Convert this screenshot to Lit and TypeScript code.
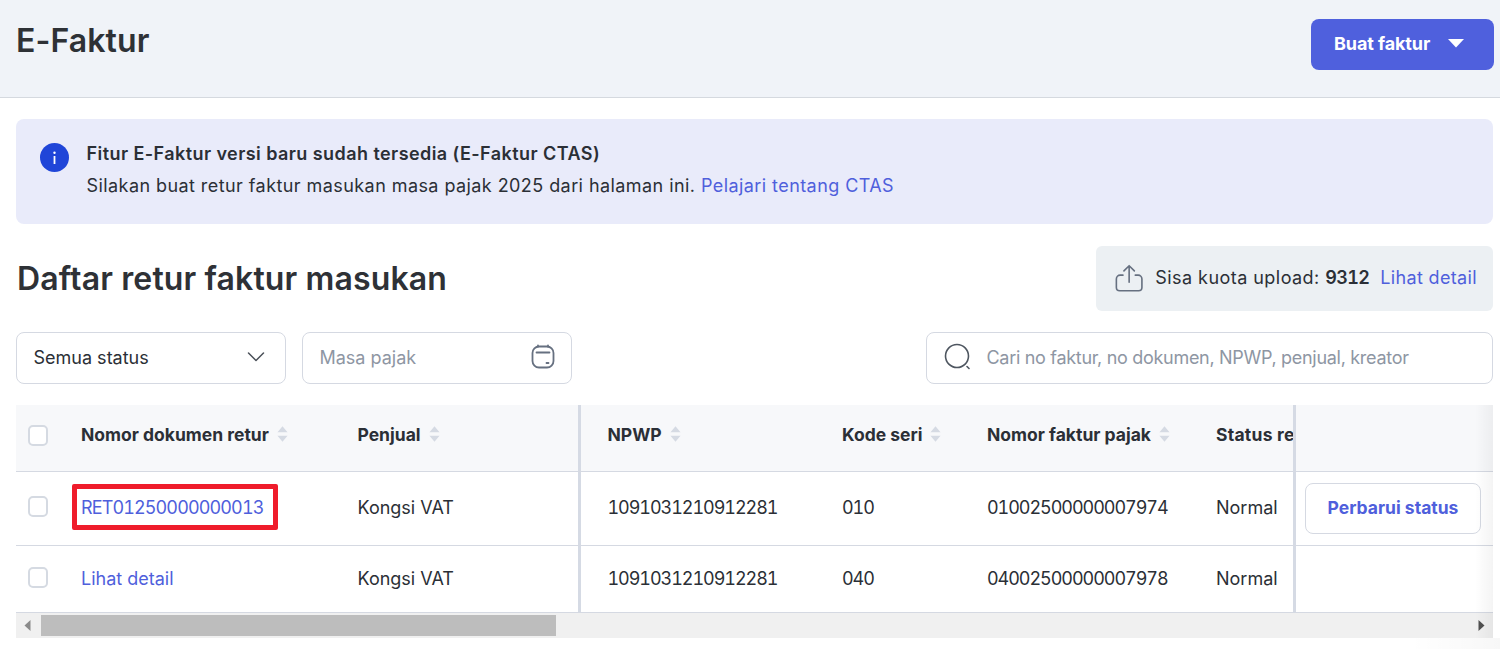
import { LitElement, html, css } from "lit";
import { customElement } from "lit/decorators.js";

const sort = html`<svg class="sort" width="11" height="18" viewBox="0 0 12 18"><path d="M6 0.5 11.5 7H0.5Z M0.5 11H11.5L6 17.5Z" fill="#d5dae3"/></svg>`;

@customElement("app-root")
export class AppRoot extends LitElement {
  static styles = css`
    :host { display: block; width: 1500px; height: 649px; overflow: hidden; background: #fff; font-family: Inter, "Liberation Sans", sans-serif; color: #2b2f36; font-size: 18px; position: relative; }
    * { box-sizing: border-box; }
    a { color: #4f5fdc; text-decoration: none; }
    .num { font-variant-numeric: tabular-nums; letter-spacing: -1.05px; }
    .head { height: 98px; background: #f0f3f8; border-bottom: 1px solid #d5d9df; display: flex; justify-content: space-between; padding: 20px 6px 0 16px; }
    h1 { margin: 0; font-size: 32px; line-height: 42px; font-weight: 600; color: #2e3136; letter-spacing: 0.1px; }
    .cta { width: 183px; height: 51px; margin-top: -1px; background: #4f60dd; color: #fff; border-radius: 8px; display: flex; align-items: center; padding-left: 23px; gap: 18px; font-weight: 650; font-size: 18px; letter-spacing: -0.1px; padding-bottom: 2px; }
    .banner { margin: 21px 7px 0 16px; height: 105px; background: #e9ebfa; border-radius: 8px; display: flex; gap: 17.5px; padding: 19px 24px; line-height: 32px; letter-spacing: 0.43px; }
    .banner svg { margin-top: 5px; flex: none; }
    .banner b { font-weight: 600; display: block; }
    .sec { margin: 22px 7px 0 17px; display: flex; justify-content: space-between; height: 65px; align-items: center; }
    h2 { margin: 0; font-size: 32px; font-weight: 600; color: #2e3136; letter-spacing: 0.13px; }
    .quota { width: 397px; height: 65px; background: #ecf0f3; border-radius: 6px; display: flex; align-items: center; padding: 0 16px 2px 18px; gap: 11px; white-space: nowrap; letter-spacing: 0.35px; }
    .quota span { letter-spacing: 0.45px; }
    .quota b { font-weight: 600; font-variant-numeric: tabular-nums; letter-spacing: -0.65px; }
    .quota a { margin-left: auto; }
    .filters { margin: 21px 7px 0 16px; display: flex; gap: 16px; }
    .f { width: 270px; height: 52px; border: 1px solid #d5d9e2; border-radius: 8px; display: flex; align-items: center; justify-content: space-between; padding: 0 16px 2px 16.5px; }
    .f.sel { padding-right: 20px; }
    .ph { color: #8e96a3; }
    .search { margin-left: auto; width: 567px; justify-content: flex-start; gap: 15px; letter-spacing: -0.3px; }
    .table { margin: 21px 7px 0 16px; height: 233px; position: relative; overflow: hidden; background: #f0f0f0; }
    .row { display: grid; grid-template-columns: 49px 276px 240px 261px 145px 229px 77px 200px; background: #fff; border-bottom: 1px solid #d5d9e2; height: 74px; align-items: stretch; }
    .row.h { height: 67px; background: #f7f8fa; font-weight: 650; font-size: 17.5px; }
    .row.l { height: 67px; }
    .c { display: flex; align-items: center; padding: 0 0 3px 16px; white-space: nowrap; overflow: hidden; gap: 8px; }
    .row.h .c { padding-bottom: 8px; }
    .row.l .c { padding-bottom: 1px; }
    .c.sel { padding-left: 11.5px; padding-bottom: 4px; overflow: visible; }
    .row.h .c.sel { padding-bottom: 6px; }
    .row.l .c.sel { padding-bottom: 3px; }
    .c.mk { overflow: visible; }
    .c.left { border-right: 3px solid #d5dae4; padding-left: 16.5px; }
    .c.np { padding-left: 26.500px; }
    .c.st { padding-left: 0; }
    .row.h .c.tail { letter-spacing: 0.25px; }
    .c.right { border-left: 3px solid #d5dae4; padding-left: 9px; padding-bottom: 0; }
    .cb { width: 20px; height: 21px; border: 2px solid #d5dae2; border-radius: 5px; background: #fff; }
    .mark { position: relative; font-variant-numeric: tabular-nums; letter-spacing: -0.88px; }
    .mark::after { content: ""; box-sizing: border-box; position: absolute; left: -9px; top: -13px; width: 206px; height: 46px; border: 5px solid #ef1c2b; border-radius: 2px; }
    .btn { width: 176px; height: 51px; border: 1px solid #d5d9e2; border-radius: 8px; display: flex; align-items: center; justify-content: center; color: #4f5fdc; font-weight: 650; background: #fff; font-size: 17.5px; padding-bottom: 2px; }
    .bar { height: 25px; background: #f0f0f0; display: flex; align-items: center; position: relative; }
    .thumb { position: absolute; left: 25px; top: 2px; width: 515px; height: 21px; background: #bdbdbd; }
    .ar { position: absolute; top: 7px; }
    .fade { position: absolute; right: 0; top: 0; bottom: 0; width: 18px; background: linear-gradient(to right, rgba(0,0,0,0), rgba(0,0,0,0.045)); pointer-events: none; }
    .glow { position: absolute; right: 0; bottom: 0; width: 90px; height: 11px; background: linear-gradient(to right, rgba(0,0,0,0), rgba(0,0,0,0.03)); pointer-events: none; }
  `;

  private row(cls: string, cells: unknown[]) {
    return html`<div class="row ${cls}">
      <div class="c sel"><span class="cb"></span></div>
      <div class="c mk">${cells[0]}</div>
      <div class="c left">${cells[1]}</div>
      <div class="c np">${cells[2]}</div>
      <div class="c st">${cells[3]}</div>
      <div class="c st">${cells[4]}</div>
      <div class="c st tail">${cells[5]}</div>
      <div class="c right">${cells[6]}</div>
    </div>`;
  }

  render() {
    const th = (t: string) => html`<span>${t}</span>${sort}`;
    const num = (t: string) => html`<span class="num">${t}</span>`;
    return html`
      <div class="head">
        <h1>E-Faktur</h1>
        <div class="cta">Buat faktur
          <svg width="16" height="9" viewBox="0 0 16 9"><path d="M0 0H16L8 8.5Z" fill="#fff"/></svg>
        </div>
      </div>
      <div class="banner">
        <svg width="29" height="29" viewBox="0 0 29 29"><circle cx="14.5" cy="14.5" r="14.5" fill="#1f45d8"/><rect x="13.6" y="13" width="1.8" height="8" fill="#fff"/><circle cx="14.5" cy="9.8" r="1.2" fill="#fff"/></svg>
        <div><b>Fitur E-Faktur versi baru sudah tersedia (E-Faktur CTAS)</b>Silakan buat retur faktur masukan masa pajak 2025 dari halaman ini. <a>Pelajari tentang CTAS</a></div>
      </div>
      <div class="sec">
        <h2>Daftar retur faktur masukan</h2>
        <div class="quota">
          <svg width="32" height="32" viewBox="0 0 32 32" fill="none" stroke="#667080" stroke-width="1.7" stroke-linecap="round" stroke-linejoin="round"><path d="M9.5 13H6.5A4 4 0 0 0 2.5 17V26A3.5 3.5 0 0 0 6 29.500H26A3.500 3.500 0 0 0 29.500 26V17A4 4 0 0 0 25.500 13H22.500"/><path d="M16 20.500V3M10.500 8.500 16 3 21.500 8.500"/></svg>
          <span>Sisa kuota upload: <b>9312</b></span><a>Lihat detail</a>
        </div>
      </div>
      <div class="filters">
        <div class="f sel">Semua status
          <svg width="18" height="10" viewBox="0 0 18 10" fill="none" stroke="#4a5058" stroke-width="1.500" stroke-linecap="round" stroke-linejoin="round"><path d="M1.500 1 9 8.500 16.500 1"/></svg>
        </div>
        <div class="f"><span class="ph">Masa pajak</span>
          <svg width="24" height="26" viewBox="0 0 24 26" fill="none" stroke="#667080" stroke-width="1.800" stroke-linecap="round"><rect x="1.500" y="2.500" width="21" height="21" rx="6.500"/><path d="M7 1.500V2.500M17 1.500V2.500M5.500 8.500H18.500M15.500 19H17.500"/></svg>
        </div>
        <div class="f search">
          <svg width="28" height="28" viewBox="0 0 28 28" fill="none" stroke="#4e5660" stroke-width="1.600" stroke-linecap="round"><circle cx="13" cy="13" r="11.500"/><path d="M23 23.500 25 25.500"/></svg>
          <span class="ph">Cari no faktur, no dokumen, NPWP, penjual, kreator</span>
        </div>
      </div>
      <div class="table">
        ${this.row("h", [th("Nomor dokumen retur"), th("Penjual"), th("NPWP"), th("Kode seri"), th("Nomor faktur pajak"), "Status retur", ""])}
        ${this.row("", [html`<a class="mark">RET01250000000013</a>`, "Kongsi VAT", num("1091031210912281"), num("010"), num("01002500000007974"), "Normal", html`<div class="btn">Perbarui status</div>`])}
        ${this.row("l", [html`<a>Lihat detail</a>`, "Kongsi VAT", num("1091031210912281"), num("040"), num("04002500000007978"), "Normal", ""])}
        <div class="bar">
          <svg class="ar" style="left:8px" width="7" height="11" viewBox="0 0 7 11"><path d="M6.500 0V11L0.500 5.500Z" fill="#8a8a8a"/></svg>
          <div class="thumb"></div>
          <svg class="ar" style="right:8px" width="7" height="11" viewBox="0 0 7 11"><path d="M0.500 0V11L6.500 5.500Z" fill="#505050"/></svg>
        </div>
        <div class="fade"></div>
      </div>
      <div class="glow"></div>
    `;
  }
}
